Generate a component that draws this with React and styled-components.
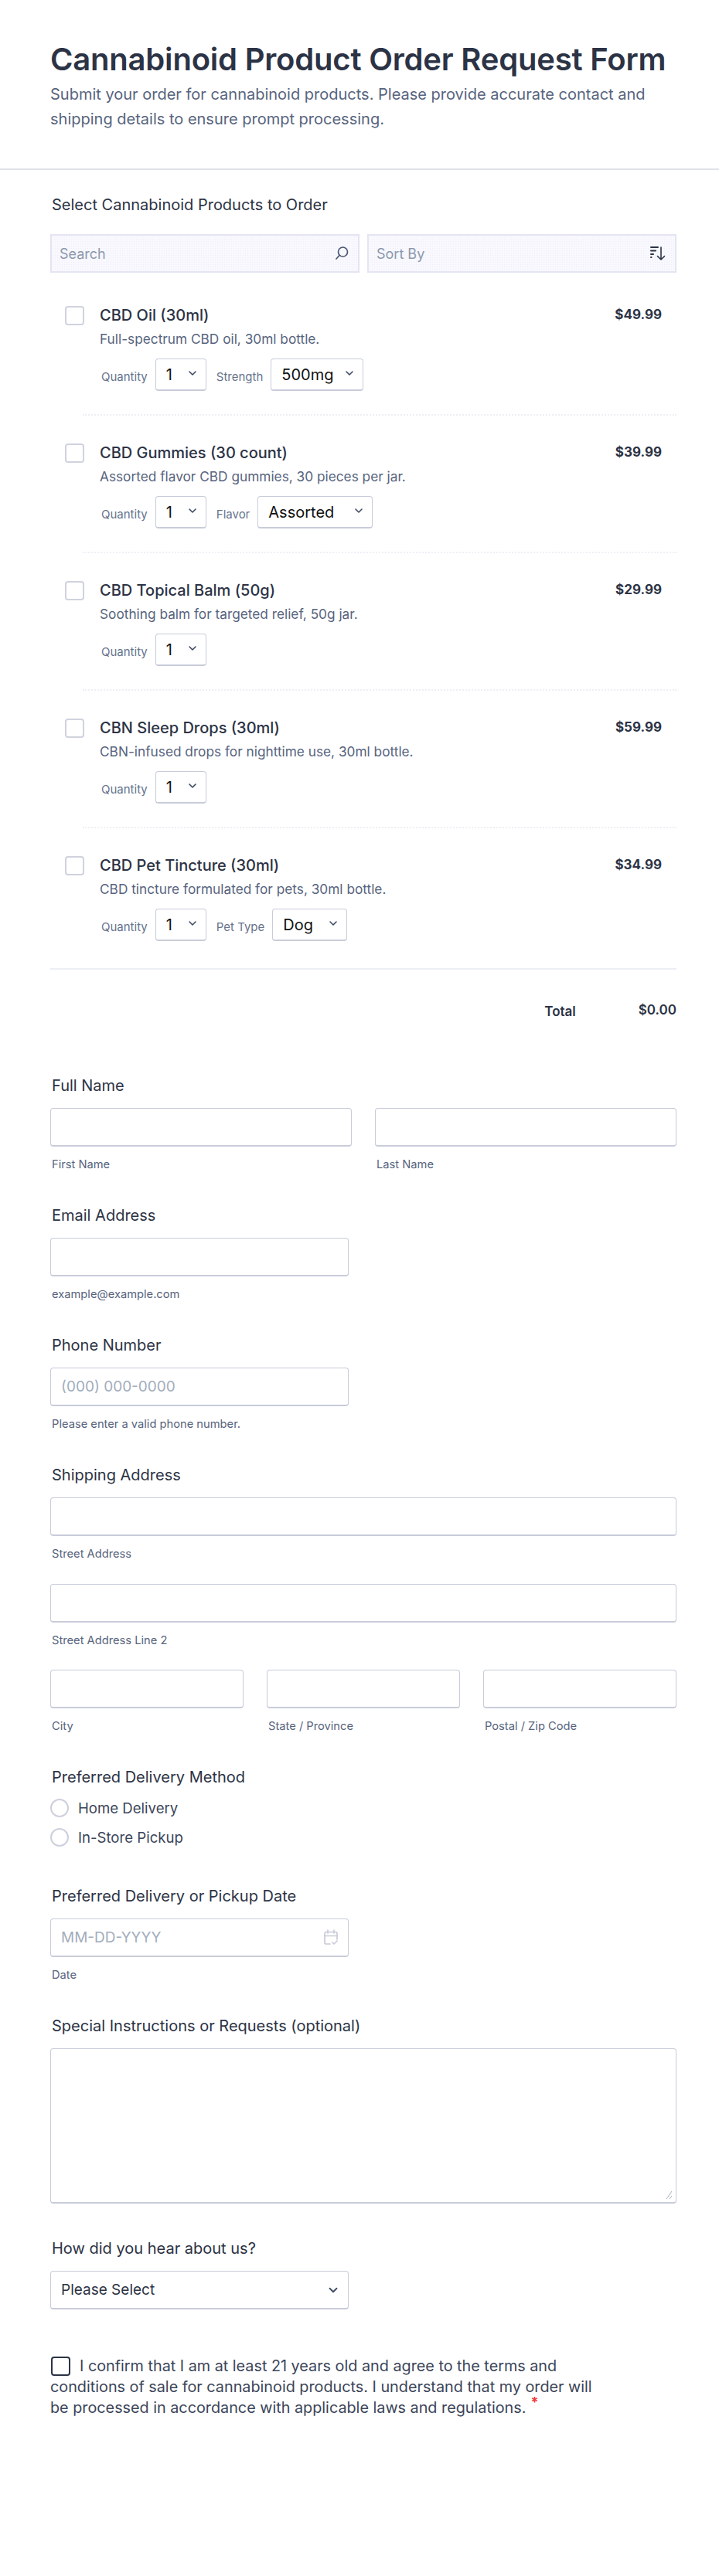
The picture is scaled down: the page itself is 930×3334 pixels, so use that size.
import React from 'react';
import styled, { createGlobalStyle } from 'styled-components';
import { ChevronDown } from 'lucide-react';

const GlobalStyle = createGlobalStyle`
  * { box-sizing: border-box; }
  body {
    margin: 0;
    background: #fff;
    font-family: Inter, "Noto Sans", sans-serif;
    color: #2c3345;
  }
`;

const Page = styled.div`
  width: 930px;
  min-height: 3334px;
  background: #fff;
`;

const Header = styled.header`
  padding: 52px 55px 48px 65px;
  border-bottom: 2px solid #e0e2ea;
`;

const Title = styled.h1`
  margin: 0;
  font-size: 40px;
  line-height: 50px;
  font-weight: 600;
  letter-spacing: -0.2px;
  color: #2c3345;
`;

const Subtitle = styled.p`
  margin: 4px 0 0;
  font-size: 20px;
  line-height: 32px;
  color: #57647e;
`;

const Body = styled.main`
  padding: 32px 55px 0 65px;
`;

const Label = styled.div`
  margin: 0 0 16px 2px;
  font-size: 20px;
  line-height: 26px;
  font-weight: 400;
  color: #2c3345;
`;

const Toolbar = styled.div`
  display: grid;
  grid-template-columns: 1fr 1fr;
  gap: 10px;
  margin: 25px 0 43px;
`;

const ToolLabel = styled(Label)`
  margin-bottom: 0;
`;

const ToolField = styled.div`
  height: 50px;
  display: flex;
  align-items: center;
  justify-content: space-between;
  padding: 0 11px 0 10px;
  border: 2px solid #e3e5f2;
  color: #8d98ad;
  font-size: 18px;
  background-color: #f8f8fe;
  background-image: radial-gradient(#eeeef6 0.6px, transparent 0.7px);
  background-size: 3px 3px;
`;

const ProductRow = styled.section`
  display: flex;
  height: 140px;
  padding-left: 19px;
`;

const Check = styled.span`
  flex: none;
  width: 25px;
  height: 25px;
  border: 2px solid #d0d3de;
  border-radius: 4px;
  background: #fff;
`;

const ProductMain = styled.div`
  flex: 1;
  margin-left: 20px;
`;

const ProductHead = styled.div`
  display: flex;
  justify-content: space-between;
  margin-top: -1px;
  padding-right: 19px;
`;

const ProductName = styled.div`
  font-size: 20px;
  line-height: 26px;
  font-weight: 500;
  color: #2c3345;
`;

const Price = styled.div`
  font-size: 17px;
  line-height: 24px;
  font-weight: 700;
  color: #2c3345;
`;

const ProductDesc = styled.div`
  margin-top: 7px;
  font-size: 17.25px;
  line-height: 22px;
  color: #57647e;
`;

const Options = styled.div`
  display: flex;
  align-items: center;
  gap: 10px;
  margin: 14px 0 0 2px;
`;

const OptionLabel = styled.span`
  padding-top: 4px;
  font-size: 15px;
  color: #67738c;
  margin-left: ${p => (p.$next ? '3px' : '0')};
`;

const SelectBox = styled.div`
  position: relative;
  display: flex;
  align-items: center;
  width: ${p => p.$w}px;
  height: 42px;
  padding-left: 13px;
  border: 1px solid #c8ccda;
  border-bottom-width: 2px;
  border-radius: 4px;
  background: #fff;
  font-size: 20px;
  color: #111;
  svg {
    position: absolute;
    right: 9px;
    top: 10px;
    color: #3d4a63;
  }
`;

const Rule = styled.div`
  height: 2px;
  margin: 0 0 36px 42px;
  border-top: 2px dotted #eeeff5;
`;

const TotalRow = styled.div`
  display: flex;
  justify-content: flex-end;
  align-items: flex-start;
  gap: 81px;
  height: 139px;
  margin-top: 5px;
  padding-top: 40px;
  border-top: 2px solid #eceef5;
`;

const TotalLabel = styled.span`
  font-size: 17px;
  font-weight: 600;
  line-height: 28px;
  color: #2c3345;
`;

const TotalValue = styled.span`
  font-size: 17px;
  font-weight: 600;
  line-height: 24px;
  color: #2c3345;
`;

const Group = styled.div`
  margin-bottom: ${p => p.$gap ?? 43}px;
`;

const Fields = styled.div`
  display: grid;
  grid-template-columns: ${p => p.$cols};
  gap: 30px;
  margin-top: ${p => p.$top ?? 0}px;
`;

const Field = styled.div`
  min-width: 0;
`;

const Input = styled.div`
  display: flex;
  align-items: center;
  justify-content: space-between;
  width: ${p => (p.$w ? `${p.$w}px` : '100%')};
  height: 50px;
  margin-top: ${p => p.$top ?? 0}px;
  padding: 0 12px 0 13px;
  border: 1px solid #c8ccda;
  border-bottom-width: 2px;
  border-radius: 4px;
  background: #fff;
  font-size: 19px;
  color: #a2adbd;
`;

const SubLabel = styled.div`
  margin: 13px 0 0 2px;
  font-size: 14.7px;
  line-height: 20px;
  color: #57647e;
`;

const RadioLabel = styled(Label)`
  margin-bottom: 15px;
`;

const RadioRow = styled.div`
  display: flex;
  align-items: center;
  gap: 12px;
  height: 24px;
  margin-bottom: 14px;
  font-size: 18.6px;
  color: #3b4559;
`;

const Radio = styled.span`
  width: 24px;
  height: 24px;
  border: 2px solid #cdd0dc;
  border-radius: 50%;
`;

const TextArea = styled.div`
  position: relative;
  height: 201px;
  border: 1px solid #c8ccda;
  border-bottom-width: 2px;
  border-radius: 4px;
  background: #fff;
  svg {
    position: absolute;
    right: 3px;
    bottom: 3px;
  }
`;

const SelectField = styled(Input)`
  color: #2c3345;
  svg { color: #3d4a63; margin-right: -2px; }
`;

const Confirm = styled.p`
  width: 710px;
  margin: 60px 0 0;
  font-size: 19.8px;
  line-height: 27px;
  color: #3b4559;
`;

const ConfirmBox = styled.span`
  display: inline-block;
  width: 25px;
  height: 25px;
  margin: 0 12px 0 1px;
  vertical-align: -6px;
  border: 2px solid #2c3345;
  border-radius: 4px;
`;

const Star = styled.sup`
  margin-left: 6px;
  color: #f23a3c;
  font-size: 18px;
  font-weight: 700;
  line-height: 0;
`;

const SearchIcon = () => (
  <svg width="20" height="20" viewBox="0 0 20 20" fill="none" stroke="#4b5670" strokeWidth="1.7" strokeLinecap="round">
    <circle cx="11.5" cy="8" r="6" />
    <path d="M7 12.5 3 17" />
  </svg>
);

const SortIcon = () => (
  <svg width="22" height="22" viewBox="0 0 22 22" fill="none" stroke="#2c3345" strokeWidth="2" strokeLinecap="round" strokeLinejoin="round">
    <path d="M2 3h9M2 7.5h6M2 12h3M2 16h.5" />
    <path d="M15 3v16M10.5 14.5 15 19l4.5-4.5" strokeWidth="1.6" />
  </svg>
);

const CalendarIcon = () => (
  <svg width="20" height="22" viewBox="0 0 20 22" fill="none" stroke="#c8ccd8" strokeWidth="1.7" strokeLinecap="round" strokeLinejoin="round">
    <path d="M9 19H4a2 2 0 0 1-2-2V5.5a2 2 0 0 1 2-2h12a2 2 0 0 1 2 2V13" />
    <path d="M2 8.5h16M6 1v4M14 1v4M12 17l2 2 4-4" />
  </svg>
);

const Grip = () => (
  <svg width="10" height="14" viewBox="0 0 10 14" stroke="#a9aebb" strokeWidth="1">
    <path d="M1 13 8 3M5 13 8 9" />
  </svg>
);

const products = [
  { name: 'CBD Oil (30ml)', price: '$49.99', desc: 'Full-spectrum CBD oil, 30ml bottle.', opt: 'Strength', value: '500mg', w: 120 },
  { name: 'CBD Gummies (30 count)', price: '$39.99', desc: 'Assorted flavor CBD gummies, 30 pieces per jar.', opt: 'Flavor', value: 'Assorted', w: 149 },
  { name: 'CBD Topical Balm (50g)', price: '$29.99', desc: 'Soothing balm for targeted relief, 50g jar.' },
  { name: 'CBN Sleep Drops (30ml)', price: '$59.99', desc: 'CBN-infused drops for nighttime use, 30ml bottle.' },
  { name: 'CBD Pet Tincture (30ml)', price: '$34.99', desc: 'CBD tincture formulated for pets, 30ml bottle.', opt: 'Pet Type', value: 'Dog', w: 97 },
];

const Product = ({ item, last }) => (
  <>
    <ProductRow>
      <Check />
      <ProductMain>
        <ProductHead>
          <ProductName>{item.name}</ProductName>
          <Price>{item.price}</Price>
        </ProductHead>
        <ProductDesc>{item.desc}</ProductDesc>
        <Options>
          <OptionLabel>Quantity</OptionLabel>
          <SelectBox $w={66}>1<ChevronDown size={16} strokeWidth={2.4} /></SelectBox>
          {item.opt && <OptionLabel $next>{item.opt}</OptionLabel>}
          {item.opt && <SelectBox $w={item.w}>{item.value}<ChevronDown size={16} strokeWidth={2.4} /></SelectBox>}
        </Options>
      </ProductMain>
    </ProductRow>
    {!last && <Rule />}
  </>
);

export default function App() {
  return (
    <Page>
      <GlobalStyle />
      <Header>
        <Title>Cannabinoid Product Order Request Form</Title>
        <Subtitle>Submit your order for cannabinoid products. Please provide accurate contact and shipping details to ensure prompt processing.</Subtitle>
      </Header>
      <Body>
        <ToolLabel>Select Cannabinoid Products to Order</ToolLabel>
        <Toolbar>
          <ToolField>Search<SearchIcon /></ToolField>
          <ToolField>Sort By<SortIcon /></ToolField>
        </Toolbar>
        {products.map((item, i) => (
          <Product key={item.name} item={item} last={i === products.length - 1} />
        ))}
        <TotalRow>
          <TotalLabel>Total</TotalLabel>
          <TotalValue>$0.00</TotalValue>
        </TotalRow>

        <Group>
          <Label>Full Name</Label>
          <Fields $cols="1fr 1fr">
            <Field><Input /><SubLabel>First Name</SubLabel></Field>
            <Field><Input /><SubLabel>Last Name</SubLabel></Field>
          </Fields>
        </Group>
        <Group>
          <Label>Email Address</Label>
          <Input $w={386} />
          <SubLabel>example@example.com</SubLabel>
        </Group>
        <Group>
          <Label>Phone Number</Label>
          <Input $w={386}>(000) 000-0000</Input>
          <SubLabel>Please enter a valid phone number.</SubLabel>
        </Group>
        <Group>
          <Label>Shipping Address</Label>
          <Input />
          <SubLabel>Street Address</SubLabel>
          <Input $top={29} />
          <SubLabel>Street Address Line 2</SubLabel>
          <Fields $cols="1fr 1fr 1fr" $top={28}>
            <Field><Input /><SubLabel>City</SubLabel></Field>
            <Field><Input /><SubLabel>State / Province</SubLabel></Field>
            <Field><Input /><SubLabel>Postal / Zip Code</SubLabel></Field>
          </Fields>
        </Group>
        <Group $gap={51}>
          <RadioLabel>Preferred Delivery Method</RadioLabel>
          <RadioRow><Radio />Home Delivery</RadioRow>
          <RadioRow><Radio />In-Store Pickup</RadioRow>
        </Group>
        <Group>
          <Label>Preferred Delivery or Pickup Date</Label>
          <Input $w={386}>MM-DD-YYYY<CalendarIcon /></Input>
          <SubLabel>Date</SubLabel>
        </Group>
        <Group $gap={45}>
          <Label>Special Instructions or Requests (optional)</Label>
          <TextArea><Grip /></TextArea>
        </Group>
        <Group $gap={0}>
          <Label>How did you hear about us?</Label>
          <SelectField $w={386}>Please Select<ChevronDown size={18} strokeWidth={2.4} /></SelectField>
        </Group>
        <Confirm>
          <ConfirmBox />I confirm that I am at least 21 years old and agree to the terms and conditions of sale for cannabinoid products. I understand that my order will be processed in accordance with applicable laws and regulations.<Star>*</Star>
        </Confirm>
      </Body>
    </Page>
  );
}
